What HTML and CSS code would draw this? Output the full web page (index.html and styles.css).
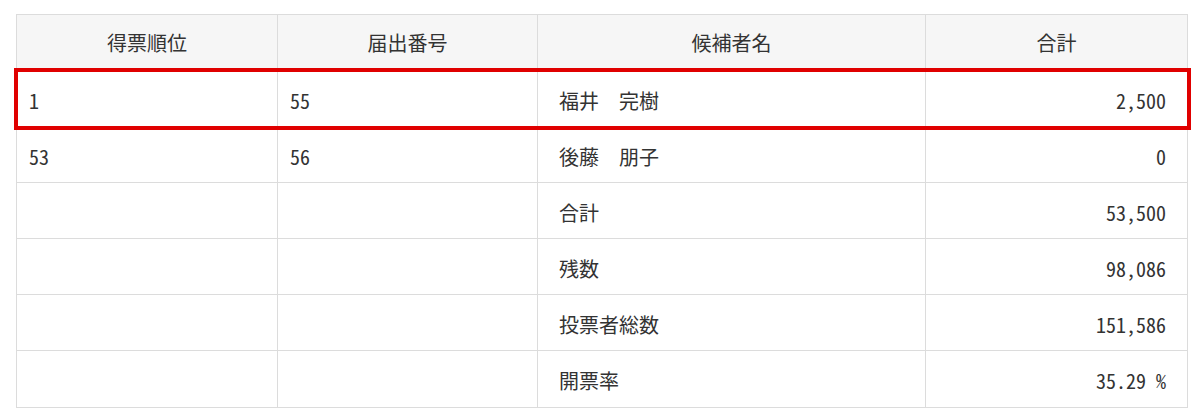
FILE: index.html
```html
<!DOCTYPE html>
<html lang="ja">
<head>
<meta charset="utf-8">
<title>開票結果</title>
<link rel="stylesheet" href="styles.css">
</head>
<body>
<div class="page">
<table class="results">
  <colgroup>
    <col class="c-rank">
    <col class="c-no">
    <col class="c-name">
    <col class="c-total">
  </colgroup>
  <thead>
    <tr><th>得票順位</th><th>届出番号</th><th>候補者名</th><th>合計</th></tr>
  </thead>
  <tbody>
    <tr class="highlight"><td>1</td><td>55</td><td class="name">福井　完樹</td><td class="num">2,500</td></tr>
    <tr><td>53</td><td>56</td><td class="name">後藤　朋子</td><td class="num">0</td></tr>
    <tr><td></td><td></td><td class="name">合計</td><td class="num">53,500</td></tr>
    <tr><td></td><td></td><td class="name">残数</td><td class="num">98,086</td></tr>
    <tr><td></td><td></td><td class="name">投票者総数</td><td class="num">151,586</td></tr>
    <tr><td></td><td></td><td class="name">開票率</td><td class="num">35.29 %</td></tr>
  </tbody>
</table>
</div>
</body>
</html>
```
FILE: styles.css
```css
html, body {
  margin: 0;
  background: #ffffff;
}
.page {
  padding: 14px 0 0 16px;
}
.results {
  width: 1171px;
  border-collapse: collapse;
  table-layout: fixed;
  font-family: "Noto Sans CJK JP", "Noto Sans", sans-serif;
  font-feature-settings: "hwid";
  font-size: 20px;
  color: #333333;
}
.c-rank { width: 261px; }
.c-no { width: 260px; }
.c-name { width: 388px; }
.c-total { width: 262px; }
.results th,
.results td {
  border: 1px solid #dcdcdc;
  padding: 0 12px;
  text-align: left;
  vertical-align: middle;
  font-weight: 400;
  line-height: 1;
}
.results th {
  background: #f6f6f6;
  text-align: center;
  height: 55px;
}
.results td {
  padding-top: 4px;
  height: 51.1px;
}
.results td.name {
  padding-left: 21px;
  font-feature-settings: normal;
}
.results td.num {
  text-align: right;
  padding-right: 21px;
}
.results tr.highlight {
  outline: 4px solid #e00000;
  outline-offset: -1px;
}
```
